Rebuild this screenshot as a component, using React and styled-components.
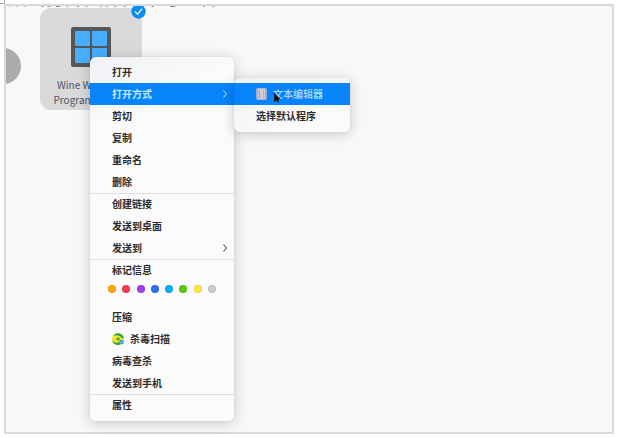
import React from "react";
import styled, { createGlobalStyle } from "styled-components";

const GlobalStyle = createGlobalStyle`
    * {
        box-sizing: border-box;
    }

    body {
        margin: 0;
        background: #fff;
        font-family: "Noto Sans CJK SC", "Noto Sans", sans-serif;
    }
`;

const Page = styled.main`
    position: relative;
    height: 100vh;
    padding: 4px;
`;

const Corner = styled.span`
    position: absolute;
    top: 0;
    left: 0;
    width: 5px;
    height: 4px;
    border: solid #a9a9a9;
    border-width: 0 1px 1px 0;
`;

const Desktop = styled.section`
    position: relative;
    height: 100%;
    overflow: hidden;
    border: 2px solid #d9d9d9;
    background: #f8f8f8;
`;

const Heading = styled.h1`
    position: absolute;
    top: -20px;
    left: 2px;
    margin: 0;
    color: #6d6d6d;
    font-size: 19px;
    font-weight: 500;
    line-height: 22px;
    white-space: nowrap;
`;

const Handle = styled.span`
    position: absolute;
    top: 42px;
    left: -21px;
    width: 36px;
    height: 36px;
    border-radius: 50%;
    background: #ababab;
`;

const Tile = styled.figure`
    position: relative;
    display: flex;
    flex-direction: column;
    align-items: center;
    width: 102px;
    height: 102px;
    margin: 2px 34px;
    padding-top: 19px;
    border-radius: 11px;
    background: #d9d9d9;
`;

const Caption = styled.figcaption`
    margin-top: 10px;
    color: #4a536b;
    font-size: 10px;
    line-height: 15px;
    text-align: center;
    white-space: nowrap;
`;

const Badge = styled.svg`
    position: absolute;
    top: -4px;
    right: -4px;
`;

const Menu = styled.div`
    position: absolute;
    top: ${(props) => props.$top}px;
    left: ${(props) => props.$left}px;
    width: ${(props) => props.$width}px;
    padding: ${(props) => props.$padding};
    border-radius: 6px;
    background: linear-gradient(155deg, #f0f1f5 0, #fbfbfb 70px);
    box-shadow: 0 2px 14px rgba(0, 0, 0, 0.2), 0 0 1px rgba(0, 0, 0, 0.2);
`;

const Group = styled.div`
    & + & {
        box-shadow: inset 0 1px #dedede;
    }
`;

const Item = styled.button`
    display: flex;
    align-items: center;
    width: 100%;
    height: 22px;
    padding: 0 6px 0 22px;
    border: 0;
    background: ${(props) => (props.$active ? "#0784fb" : "transparent")};
    color: ${(props) => (props.$active ? "#c9e8ff" : "#2c2c2c")};
    font-family: inherit;
    font-size: 10px;
    font-weight: ${(props) => (props.$light ? 400 : 700)};
    line-height: 20px;
    text-align: left;
    white-space: nowrap;

    & > svg:first-child {
        margin-right: 6px;
    }
`;

const Label = styled.span`
    flex: 1;
`;

const Tags = styled.div`
    display: flex;
    justify-content: space-between;
    height: 25px;
    padding: 4px 18px 0;
`;

const Tag = styled.button`
    width: 8px;
    height: 8px;
    padding: 0;
    border: 1px solid rgba(0, 0, 0, 0.08);
    border-radius: 50%;
    background: ${(props) => props.$color};
`;

const Cursor = styled.svg`
    position: absolute;
    top: 92px;
    left: 273px;
`;

const tags = [
    ["橙色", "#ffa503"],
    ["红色", "#fb3b51"],
    ["紫色", "#a03cf3"],
    ["蓝色", "#2b70ee"],
    ["天蓝", "#07aef8"],
    ["绿色", "#58cb0c"],
    ["黄色", "#ffe83d"],
    ["灰色", "#cecece"],
];

const WindowIcon = () => (
    <svg width="40" height="40" viewBox="0 0 40 40">
        <rect width="40" height="40" rx="2" fill="#555759" />
        <g fill="#47aeff">
            <rect x="4" y="4" width="15" height="15" rx="1" />
            <rect x="21" y="4" width="15" height="15" rx="1" />
            <rect x="4" y="21" width="15" height="15" rx="1" />
            <rect x="21" y="21" width="15" height="15" rx="1" />
        </g>
    </svg>
);

const Chevron = () => (
    <svg width="6" height="8" viewBox="0 0 6 8" fill="none" stroke="currentColor">
        <path d="M1.5 0.5 4.5 4l-3 3.5" />
    </svg>
);

const ShieldIcon = () => (
    <svg width="12" height="12" viewBox="0 0 12 12">
        <circle cx="6" cy="6" r="6" fill="#f0e62c" />
        <path d="M1 3A6 6 0 0 1 11.8 5L9.6 5.2C8.5 2.4 4.5 1.6 1 3Z" fill="#22a548" />
        <path d="M.2 7.5C2.5 10 5.5 10.4 8 8.8l3 .5A6 6 0 0 1 .2 7.5Z" fill="#33a544" />
        <path d="M5.4 4h1.4v1.3H8v1.4H6.8V8H5.4V6.7H4.2V5.3h1.2Z" fill="#4fae3c" />
        <circle cx="9.6" cy="9" r="2.3" fill="#3a9fd0" />
        <path d="m8.5 9 .8.8L10.7 8.3" fill="none" stroke="#d8f7ff" strokeWidth=".7" />
    </svg>
);

const EditorIcon = () => (
    <svg width="11" height="12" viewBox="0 0 11 12">
        <rect width="11" height="12" rx="2" fill="#a4afd2" />
        <rect x="2" y="1" width="7" height="10" rx="1" fill="#d2cfd6" />
        <path d="M3.5 2v8" stroke="#8d9dcf" />
        <path d="M7.5 2v8" stroke="#c3b184" />
    </svg>
);

export default () => (
    <>
        <GlobalStyle />
        <Page>
            <Corner />
            <Desktop>
                <Heading>双击打开文件夹即可查看</Heading>
                <Handle />
                <Tile>
                    <WindowIcon />
                    <Caption>
                        Wine Windows
                        <br />
                        Program Loader
                    </Caption>
                    <Badge width="15" height="15" viewBox="0 0 15 15">
                        <circle cx="7.5" cy="7.5" r="7.2" fill="#078cf8" />
                        <path d="m4 7.5 2.6 2.7L11 4.8" fill="none" stroke="#e5f5ff" strokeWidth="1.4" />
                    </Badge>
                </Tile>
            </Desktop>

            <Menu $top={57} $left={90} $width={144} $padding="4px 0 5px">
                <Group>
                    <Item>打开</Item>
                    <Item $active>
                        <Label>打开方式</Label>
                        <Chevron />
                    </Item>
                    <Item>剪切</Item>
                    <Item>复制</Item>
                    <Item>重命名</Item>
                    <Item>删除</Item>
                </Group>
                <Group>
                    <Item>创建链接</Item>
                    <Item>发送到桌面</Item>
                    <Item>
                        <Label>发送到</Label>
                        <Chevron />
                    </Item>
                </Group>
                <Group>
                    <Item>标记信息</Item>
                    <Tags>
                        {tags.map(([name, color]) => (
                            <Tag key={name} $color={color} aria-label={name} />
                        ))}
                    </Tags>
                    <Item>压缩</Item>
                    <Item>
                        <ShieldIcon />
                        杀毒扫描
                    </Item>
                    <Item>病毒查杀</Item>
                    <Item>发送到手机</Item>
                </Group>
                <Group>
                    <Item>属性</Item>
                </Group>
            </Menu>

            <Menu $top={78} $left={234} $width={116} $padding="5px 0">
                <Item $active $light>
                    <EditorIcon />
                    文本编辑器
                </Item>
                <Item>选择默认程序</Item>
            </Menu>

            <Cursor width="8" height="11" viewBox="0 0 8 11">
                <path d="M1 1v9l2.2-1.6L5 10.5 6.2 9.4 5 7.6 7.5 7Z" fill="#111" />
            </Cursor>
        </Page>
    </>
);
